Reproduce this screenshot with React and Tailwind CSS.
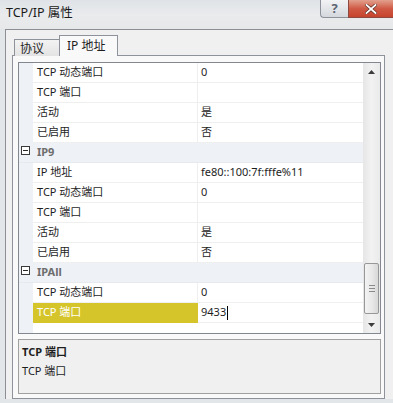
import React from 'react';

const FONT = { fontFamily: '"Noto Sans", "Noto Sans CJK SC", sans-serif' };

const ROWS = [
  { label: 'TCP 动态端口', value: '0' },
  { label: 'TCP 端口', value: '' },
  { label: '活动', value: '是' },
  { label: '已启用', value: '否' },
  { cat: 'IP9' },
  { label: 'IP 地址', value: 'fe80::100:7f:fffe%11' },
  { label: 'TCP 动态端口', value: '0' },
  { label: 'TCP 端口', value: '' },
  { label: '活动', value: '是' },
  { label: '已启用', value: '否' },
  { cat: 'IPAll' },
  { label: 'TCP 动态端口', value: '0' },
  { label: 'TCP 端口', value: '9433', selected: true },
];

function CategoryRow({ name }) {
  return (
    <div className="flex h-[20px] bg-[#eef1f6] border-b border-[#e6e9ee]">
      <div className="w-[14px] shrink-0 pt-[3px] pl-[2px]">
        <div className="w-[9px] h-[9px] border border-[#3a3a3a] bg-white flex items-center justify-center">
          <div className="w-[5px] h-px bg-[#2a2a2a]" />
        </div>
      </div>
      <div className="pl-[4px] flex items-center text-[11px] font-bold text-[#6d6d6d]">{name}</div>
    </div>
  );
}

function PropRow({ label, value, selected }) {
  return (
    <div className="flex h-[20px] bg-[#eef1f6]">
      <div className="w-[14px] shrink-0" />
      <div
        className={`w-[165px] shrink-0 pl-[4px] flex items-center text-[11px] border-b border-r ${
          selected ? 'bg-[#d5c52b] text-white border-[#d5c52b]' : 'bg-white text-[#1e1e1e] border-[#efefef]'
        }`}
      >
        {label}
      </div>
      <div className="flex-1 bg-white pl-[3px] flex items-center text-[11px] text-[#1e1e1e] border-b border-[#efefef]">
        {value}
        {selected && <span className="ml-px w-px h-[14px] bg-black" />}
      </div>
    </div>
  );
}

function ScrollBar() {
  return (
    <div className="w-[17px] shrink-0 flex flex-col bg-gradient-to-r from-[#e6e6e6] via-[#f2f2f2] to-[#eaeaea]">
      <div className="h-[17px] flex items-center justify-center">
        <svg width="7" height="4" viewBox="0 0 7 4"><path d="M0 4 L3.5 0 L7 4 Z" fill="#3c3c3c" /></svg>
      </div>
      <div className="flex-1 flex flex-col justify-end pb-[2px]">
        <div className="mx-px h-[51px] rounded-[2px] border border-[#979797] bg-gradient-to-r from-[#f3f3f3] via-[#e9e9e9] to-[#d8d8d8] flex flex-col items-center justify-center gap-[2px]">
          <div className="w-[6px] h-px bg-[#8a8a8a]" />
          <div className="w-[6px] h-px bg-[#8a8a8a]" />
          <div className="w-[6px] h-px bg-[#8a8a8a]" />
        </div>
      </div>
      <div className="h-[17px] flex items-center justify-center">
        <svg width="7" height="4" viewBox="0 0 7 4"><path d="M0 0 L3.5 4 L7 0 Z" fill="#3c3c3c" /></svg>
      </div>
    </div>
  );
}

export default function App() {
  return (
    <div className="w-[393px] h-[403px] overflow-hidden flex flex-col bg-[#e3e6e9]" style={FONT}>
      {/* title bar */}
      <div className="h-[29px] shrink-0 flex items-start bg-gradient-to-b from-[#dfe3e7] via-[#e9ebed] to-[#e6e8ea]">
        <div className="pl-[6px] pt-[4px] text-[12.5px] text-[#1a1a1a]">TCP/IP 属性</div>
        <div className="flex-1" />
        <div className="w-[28px] h-[18px] border-l border-b border-[#8d929a] rounded-bl-[4px] bg-gradient-to-b from-[#f2f3f5] to-[#d4d8dd] flex items-center justify-center text-[13px] font-bold text-[#5b6470]">
          ?
        </div>
        <div className="w-[45px] h-[18px] border-l border-b border-[#8c4a43] bg-gradient-to-b from-[#e2a08e] via-[#cf5a45] to-[#c7432e] flex items-center justify-center">
          <svg width="12" height="10" viewBox="0 0 12 10">
            <path d="M1.5 1 L10.5 9 M10.5 1 L1.5 9" stroke="#5a2a24" strokeWidth="3.2" strokeLinecap="square" />
            <path d="M1.5 1 L10.5 9 M10.5 1 L1.5 9" stroke="#ffffff" strokeWidth="1.8" strokeLinecap="square" />
          </svg>
        </div>
      </div>

      {/* client area */}
      <div className="flex-1 ml-[5px] mb-[4px] border-l border-t border-[#8b8e92] bg-[#f0f0f0] flex flex-col pl-[6px] pt-[5px]">
        {/* tabs */}
        <div className="flex items-end h-[21px] pl-[2px] relative z-10">
          <div className="h-[17px] w-[46px] border border-b-0 border-[#8e939b] bg-gradient-to-b from-[#f3f3f3] to-[#e3e3e3] pl-[5px] text-[12px] leading-[17px] text-[#1e1e1e]">
            协议
          </div>
          <div className="h-[21px] w-[59px] -ml-px border border-b-0 border-[#8e939b] bg-[#f9f9f9] pl-[7px] text-[12px] leading-[20px] text-[#1e1e1e]">
            IP 地址
          </div>
        </div>
        {/* tab panel */}
        <div className="w-[373px] h-[344px] -mt-px border border-[#8e939b] bg-[#f9f9f9] flex flex-col pl-[5px] pr-[3px] pt-[6px] pb-[4px]">
          {/* property grid */}
          <div className="h-[272px] border border-[#828790] bg-white flex">
            <div className="flex-1 flex flex-col">
              {ROWS.map((r, i) =>
                r.cat ? <CategoryRow key={i} name={r.cat} /> : <PropRow key={i} {...r} />
              )}
              <div className="flex-1 flex">
                <div className="w-[14px] bg-[#eef1f6]" />
                <div className="flex-1 bg-white" />
              </div>
            </div>
            <ScrollBar />
          </div>
          {/* description */}
          <div className="mt-[5px] flex-1 border border-[#a0a0a0] bg-[#f0f0f0] pl-[3px] pt-[2px] text-[11px] text-[#1e1e1e]">
            <div className="font-bold h-[19px] leading-[19px]">TCP 端口</div>
            <div className="h-[19px] leading-[19px]">TCP 端口</div>
          </div>
        </div>
      </div>
    </div>
  );
}
